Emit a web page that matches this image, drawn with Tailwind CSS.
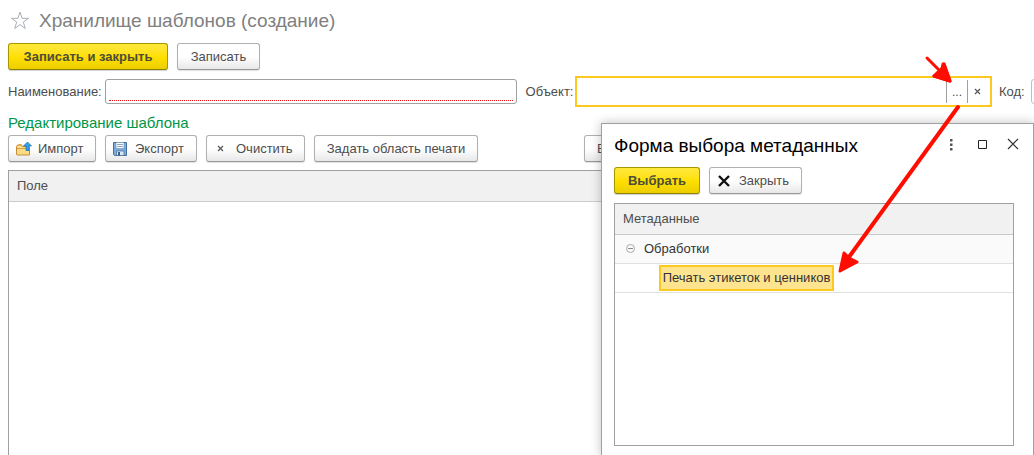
<!DOCTYPE html>
<html lang="ru">
<head>
<meta charset="utf-8">
<meta name="viewport" content="width=device-width, initial-scale=1">
<title>Хранилище шаблонов (создание)</title>
<script src="https://cdn.jsdelivr.net/npm/@tailwindcss/browser@4"></script>
</head>
<body class="relative flex min-h-screen flex-col overflow-hidden bg-white font-['Liberation_Sans',Arial,sans-serif] text-[13px] leading-4 text-[#4d4d4d]">

<main class="flex flex-1 flex-col pl-2">
  <header class="flex h-[41px] items-center gap-2 pl-[3px]">
    <button type="button" aria-label="В избранное" class="h-5 w-5 text-[#a9afb8]">
      <svg viewBox="0 0 20 20" class="h-5 w-5" fill="none" stroke="currentColor" stroke-width="1"><path d="M9 1l2.100 6.300h6.400l-5.200 3.800 2 6.400L9 13.600l-5.300 3.900 2-6.400L.5 7.300h6.400z"/></svg>
    </button>
    <h1 class="text-[19px] leading-6 text-[#808080]">Хранилище шаблонов (создание)</h1>
  </header>

  <div class="mt-[2px] flex gap-[9px]">
    <button type="button" class="h-[27px] w-40 rounded-[3px] border border-[#a89600] border-b-[#8f8000] bg-linear-to-b from-[#ffe83a] via-[#ffe000] to-[#ecce00] font-bold text-[#4d4d3a] shadow-[0_1px_1px_#00000030]">Записать и закрыть</button>
    <button type="button" class="h-[27px] w-[83px] rounded-[3px] border border-[#b0b0b0] border-b-[#989898] bg-linear-to-b from-white from-50% to-[#e8e8e8] shadow-[0_1px_1px_#00000020]">Записать</button>
  </div>

  <form class="mt-[6px] flex h-[31px] items-center">
    <label for="name" class="w-[97px] shrink-0">Наименование:</label>
    <div class="flex h-[25px] flex-[411] flex-col rounded-[3px] border border-[#a0a0a0] px-[3px] pb-[2px]">
      <input id="name" type="text" class="w-full min-w-0 flex-1 border-b border-dotted border-[#f01010] outline-none">
    </div>
    <label for="object" class="ml-[9px] w-[49px] shrink-0">Объект:</label>
    <div class="flex h-[31px] flex-[418] items-center border-2 border-[#fcca1e] pr-[3px]">
      <input id="object" type="text" class="h-full min-w-0 flex-1 outline-none">
      <button type="button" aria-label="Выбрать объект" class="h-[23px] w-[21px] border-l border-[#a0a0a0] text-[12px]">...</button>
      <button type="button" aria-label="Очистить объект" class="flex h-[23px] w-5 items-center justify-center border-l border-[#a0a0a0]">
        <svg viewBox="0 0 7 7" class="h-[7px] w-[7px]" stroke="#555" stroke-width="1.200"><path d="M1 1l5 5M6 1L1 6"/></svg>
      </button>
    </div>
    <label for="code" class="ml-[7px] w-8 shrink-0">Код:</label>
    <input id="code" type="text" class="-mr-[2px] h-[25px] w-[5px] shrink-0 rounded-l-[3px] border border-[#c0c0c0]">
  </form>

  <h2 class="mt-[6px] text-[15px] leading-5 text-[#009646]">Редактирование шаблона</h2>

  <div class="mt-[2px] flex gap-[9px]">
    <button type="button" class="flex h-[27px] w-[88px] items-center rounded-[3px] border border-[#b0b0b0] border-b-[#989898] bg-linear-to-b from-white from-50% to-[#e8e8e8] pl-[7px] shadow-[0_1px_1px_#00000020]">
      <svg viewBox="0 0 16 16" class="mr-[6px] h-4 w-4"><path d="M.5 13.500V5.500l1-1.500h4l1 1.500h6.500l.5 1v7.500H1z" fill="#fbdc85" stroke="#c88a35"/><path d="M1 7.500h12M2.500 3.500h3" stroke="#dba24b" fill="none"/><path d="M11.500 1L15.500 5h-2.500v4.500h-3V5H7.500z" fill="#35a0e6" stroke="#1b6eaa" stroke-width=".7"/></svg>
      <span>Импорт</span>
    </button>
    <button type="button" class="flex h-[27px] w-[92px] items-center rounded-[3px] border border-[#b0b0b0] border-b-[#989898] bg-linear-to-b from-white from-50% to-[#e8e8e8] pl-[7px] shadow-[0_1px_1px_#00000020]">
      <svg viewBox="0 0 16 16" class="mr-[6px] h-4 w-4"><path d="M.5 1.500h13v13H1.500l-1-1z" fill="#7da9dc" stroke="#426f9e"/><path d="M3 1.500h8v6H3z" fill="#fff" stroke="#6289b0" stroke-width=".6"/><path d="M4 3.500h6M4 5.500h6" stroke="#8aa6c2"/><path d="M3.500 10h7.500v4.500H3.500z" fill="#dce6ee" stroke="#426f9e" stroke-width=".7"/><path d="M5 11h2v3.500H5z" fill="#355e8a"/></svg>
      <span>Экспорт</span>
    </button>
    <button type="button" class="flex h-[27px] w-[99px] items-center rounded-[3px] border border-[#b0b0b0] border-b-[#989898] bg-linear-to-b from-white from-50% to-[#e8e8e8] pl-[10px] shadow-[0_1px_1px_#00000020]">
      <svg viewBox="0 0 7 7" class="mr-3 h-[7px] w-[7px]" stroke="#555" stroke-width="1.200"><path d="M1 1l5 5M6 1L1 6"/></svg>
      <span>Очистить</span>
    </button>
    <button type="button" class="h-[27px] w-[164px] rounded-[3px] border border-[#b0b0b0] border-b-[#989898] bg-linear-to-b from-white from-50% to-[#e8e8e8] shadow-[0_1px_1px_#00000020]">Задать область печати</button>
    <button type="button" class="ml-[97px] h-[27px] w-[90px] rounded-[3px] border border-[#b0b0b0] border-b-[#989898] bg-linear-to-b from-white from-50% to-[#e8e8e8] pl-3 text-left shadow-[0_1px_1px_#00000020]">В</button>
  </div>

  <div class="mt-2 flex-1 border border-b-0 border-[#a0a0a0]">
    <table class="w-full text-left">
      <thead><tr><th class="h-[30px] border-b border-[#cccccc] bg-[#f1f1f1] px-2 font-normal">Поле</th></tr></thead>
    </table>
  </div>
</main>

<section role="dialog" aria-labelledby="dialog-title" class="absolute top-[123px] right-0 -bottom-px flex w-[433px] flex-col border border-[#a0a0a0] bg-white pr-[19px] pb-[9px] pl-3 shadow-[0_0_10px_#00000040]">
  <header class="flex h-[43px] items-center">
    <h2 id="dialog-title" class="flex-1 text-[19px] leading-6 text-black">Форма выбора метаданных</h2>
    <div class="-mr-[7px] flex items-center gap-[15px]">
      <button type="button" aria-label="Ещё" class="h-4 w-4"><svg viewBox="0 0 16 16" class="h-4 w-4" fill="#555"><path d="M7 1h2.500v2.500H7zM7 5.500h2.500V8H7zM7 10h2.500v2.500H7z"/></svg></button>
      <button type="button" aria-label="Развернуть" class="h-4 w-4"><svg viewBox="0 0 16 16" class="h-4 w-4" fill="none" stroke="#222"><path d="M4.500 2.500h8v8h-8z"/></svg></button>
      <button type="button" aria-label="Закрыть окно" class="h-4 w-4"><svg viewBox="0 0 16 16" class="h-4 w-4" fill="none" stroke="#333" stroke-width="1.200"><path d="M3 1l10 10M13 1L3 11"/></svg></button>
    </div>
  </header>
  <div class="flex gap-[9px]">
    <button type="button" class="h-[27px] w-[86px] rounded-[3px] border border-[#a89600] border-b-[#8f8000] bg-linear-to-b from-[#ffe83a] via-[#ffe000] to-[#ecce00] font-bold text-[#4d4d3a] shadow-[0_1px_1px_#00000030]">Выбрать</button>
    <button type="button" class="flex h-[27px] w-[93px] items-center rounded-[3px] border border-[#b0b0b0] border-b-[#989898] bg-linear-to-b from-white from-50% to-[#e8e8e8] pl-2 shadow-[0_1px_1px_#00000020]">
      <svg viewBox="0 0 12 12" class="mr-[9px] h-3 w-3" stroke="#111" stroke-width="2.400"><path d="M1 1l10 10M11 1L1 11"/></svg>
      <span>Закрыть</span>
    </button>
  </div>
  <div class="mt-[9px] flex-1 border border-[#a0a0a0]">
    <table class="w-full text-left">
      <thead><tr><th class="h-[30px] border-b border-[#c8c8c8] bg-[#f1f1f1] px-2 font-normal">Метаданные</th></tr></thead>
      <tbody class="text-[#333]">
        <tr><td class="h-[29px] border-b border-[#e0e0e0] bg-[#fafafa] p-0">
          <div class="flex items-center gap-[9px] pl-[11px]">
            <button type="button" aria-label="Свернуть" class="h-[9px] w-[9px]"><svg viewBox="0 0 9 9" class="h-[9px] w-[9px]" fill="none" stroke="#888"><circle cx="4.500" cy="4.500" r="4" stroke="#aaa"/><path d="M2 4.500h5"/></svg></button>
            <span>Обработки</span>
          </div>
        </td></tr>
        <tr><td class="h-[29px] border-b border-[#e0e0e0] p-0 pl-[44px]">
          <div class="flex h-[26px] w-[175px] items-center justify-center border-2 border-[#fcca1e] bg-[#ffe48f] whitespace-nowrap">Печать этикеток и ценников</div>
        </td></tr>
      </tbody>
    </table>
  </div>
</section>

<svg viewBox="0 0 200 230" class="pointer-events-none absolute top-[50px] right-0 h-[230px] w-[200px]" fill="#ff0d00" stroke="#ff0d00" stroke-linecap="round" stroke-linejoin="round" aria-hidden="true">
  <path d="M93 8l14 14" stroke-width="3"/>
  <path d="M116 31l-16-5 6-4 4-8z" stroke-width="3"/>
  <path d="M116 31l-16-5 4-4 4-1 1-7h1z" stroke-width="3"/>
  <path d="M124 57L15 207" stroke-width="4"/>
  <path d="M6 221l4-18 5 5 8 4z" stroke-width="3"/>
</svg>
</body>
</html>
